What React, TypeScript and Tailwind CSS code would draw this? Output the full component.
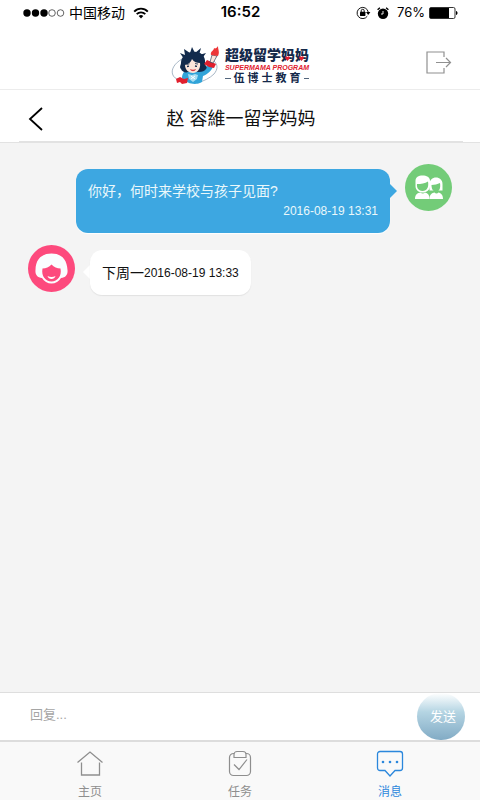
import React from "react";

const cjk = "font-['Liberation_Sans','Noto_Sans_CJK_SC',sans-serif]";

function StatusBar() {
  return (
    <div className="grid h-[25px] grid-cols-3 items-center pr-[22px] pl-[23px] text-black">
      <div className="flex items-center">
        <svg className="mr-1 h-3 w-[42px]" viewBox="0 0 42 12" aria-hidden="true">
          <circle cx="4" cy="6" r="3.7" />
          <circle cx="12.5" cy="6" r="3.7" />
          <circle cx="21" cy="6" r="3.7" />
          <circle cx="29" cy="6" r="3.3" fill="none" stroke="#222" strokeWidth="0.7" />
          <circle cx="37.5" cy="6" r="3.3" fill="none" stroke="#222" strokeWidth="0.7" />
        </svg>
        <span className="text-sm whitespace-nowrap">中国移动</span>
        <svg className="ml-2 h-3 w-4 shrink-0" viewBox="0 0 16 12" fill="none" stroke="#000" strokeWidth="1.9" aria-hidden="true">
          <path d="M1.2 4.6C5 .6 11 .6 14.8 4.6" />
          <path d="M3.7 7.2C6.1 4.8 9.9 4.8 12.3 7.2" />
          <path d="M5.7 9 8 11.4 10.3 9C9 7.8 7 7.8 5.7 9Z" fill="#000" stroke="none" />
        </svg>
      </div>
      <div className="text-center font-[Inter,sans-serif] text-[15px] font-semibold">16:52</div>
      <div className="flex items-center justify-end">
        <svg className="mr-1.5 h-[13px] w-[15px]" viewBox="0 0 15 13" aria-hidden="true">
          <path d="M11.3 10.2A5.6 5.6 0 1 1 12.2 6" fill="none" stroke="#111" strokeWidth="1" />
          <path d="M10 6h4.4l-2.2 3Z" />
          <rect x="4" y="5.8" width="5.4" height="4.2" rx=".4" />
          <path d="M5.2 6V4.8a1.5 1.5 0 0 1 3 0V6" fill="none" stroke="#111" strokeWidth="1" />
        </svg>
        <svg className="mr-2 h-3 w-3" viewBox="0 0 12 12" aria-hidden="true">
          <circle cx="6" cy="6.7" r="5.2" />
          <path d="M.6 2.8 2.9.8M11.4 2.8 9.1.8" stroke="#000" strokeWidth="1.4" />
          <path d="M6 4v3H4" fill="none" stroke="#fff" strokeWidth=".9" />
        </svg>
        <span className="font-[Inter,sans-serif] text-[13px]">76%</span>
        <svg className="ml-1 h-3 w-[29px] shrink-0" viewBox="0 0 29 12" aria-hidden="true">
          <rect x=".5" y=".5" width="25.5" height="11" rx="1.5" fill="#fff" stroke="#333" />
          <rect x="1" y="1" width="19" height="10" />
          <path d="M27 4c2 .5 2 3.500 0 4Z" />
        </svg>
      </div>
    </div>
  );
}

function Mascot() {
  return (
    <svg className="h-[40px] w-[50px]" viewBox="0 0 50 40" aria-hidden="true">
      <path d="M11 13C4 17 0 23 1.500 28c1 3 3 5 6 5M43 15c4 4 4 8 0 13-4 4-10 7-17 9" fill="none" stroke="#92a5b8" strokeWidth=".8" />
      <path d="M11 32c0-5 3-8 7-9l12 1c4-1 6-4 8-8l5 3c-2 5-6 9-11 11l-1 6c-5 3-14 3-20-4Z" fill="#31a4d9" />
      <path d="m13 13-4-6 5 2-1-6 6 4 2-6 3 6 6-5-2 7 7-2-5 7Z" fill="#122a4c" />
      <path d="M10 23c-2-2 0-4 0-6 0-6 5-11 12-11 7-1 13 4 12 11 0 3 3 4 1 6-1 2-4 3-7 3H17c-2 1-6 0-7-3Z" fill="#122a4c" />
      <path d="M14 19c4-1 6-3 7-6 2 3 5 4 8 4 1 6-3 10-7 10s-8-3-8-8Z" fill="#fbe5db" />
      <path d="m15.500 18.500 3-.7m5.500-.3 3 .6" stroke="#122a4c" strokeWidth=".8" />
      <path d="m16 20.500 2-.3m6-.2 2 .4" stroke="#122a4c" strokeWidth="1.300" />
      <path d="M19 23c2 1 4 1 6 0-1 3-5 3-6 0Z" fill="#d83a43" />
      <path d="m5 33 4-2 4 2 4-1-1 5-5 1-2-2-3 1Z" fill="#e1202e" />
      <path d="m17 28 4 1 3-1 3 1-1 4-4 3-4-3Z" fill="#a7ddf2" />
      <path d="m20 30 4 3m-4 0 4-3" stroke="#fff" />
      <path d="m33 18 3-4 9 4-2 4-5-1Z" fill="#e1202e" />
      <path d="m41 9 5 1-4 7-3-1Z" fill="#fbe5db" stroke="#122a4c" strokeWidth=".6" />
      <path d="M40 9c-1-4 3-4 3-7 1 1 3 0 4-2 0 4 2 6 0 10Z" fill="#ed3638" />
    </svg>
  );
}

function Header() {
  return (
    <header className="grid h-[65px] grid-cols-[1fr_auto_1fr] items-center border-b border-[#ececec] px-7 pt-3">
      <span />
      <div className="flex items-center gap-1 pt-1.5">
        <Mascot />
        <div className="flex flex-col items-center whitespace-nowrap text-[#14294a]">
          <div className="relative text-sm leading-[17px] font-black">
            超级留学妈妈
            <svg className="absolute right-1 bottom-[3px] h-[5px] w-5" viewBox="0 0 20 5" fill="#e1202e" aria-hidden="true">
              <path d="M2.500 5 0 2 1 0l1.500 1L4 0l1 2ZM16.500 5 14 2l1-2 1.500 1L18 0l1 2Z" />
            </svg>
          </div>
          <div className="text-[7px] leading-[7px] font-bold text-[#e1202e] italic">SUPERMAMA PROGRAM</div>
          <div className="flex w-full items-center gap-[3px] text-[11px] leading-[14px] font-bold">
            <span className="h-px flex-1 bg-[#53657c]" />
            <span className="flex gap-[3px]">
              {["伍", "博", "士", "教", "育"].map((c) => (
                <span key={c}>{c}</span>
              ))}
            </span>
            <span className="h-px flex-1 bg-[#53657c]" />
          </div>
        </div>
      </div>
      <button type="button" aria-label="退出" className="justify-self-end">
        <svg className="h-6 w-[26px]" viewBox="0 0 26 24" fill="none" stroke="#909090" strokeWidth="1.2" aria-hidden="true">
          <path d="M18 6V1H1v21h17v-5M10 11.500h14M20 7l4.500 4.500L20 16" />
        </svg>
      </button>
    </header>
  );
}

function TitleRow() {
  return (
    <div className="border-b border-[#e2e2e2]">
      <div className="mr-[17px] ml-[19px] grid h-[52px] grid-cols-[1fr_auto_1fr] items-center border-b border-[#e2e2e2] pt-1.5">
        <button type="button" aria-label="返回" className="ml-[9px] justify-self-start">
          <svg className="h-6 w-4" viewBox="0 0 16 24" fill="none" stroke="#000" strokeWidth="1.8" aria-hidden="true">
            <path d="M14 1 2 12l12 11" />
          </svg>
        </button>
        <h1 className="text-lg leading-7 text-[#111]">赵 容維一留学妈妈</h1>
        <span />
      </div>
    </div>
  );
}

function CoupleAvatar() {
  return (
    <svg className="h-[47px] w-[47px] shrink-0" viewBox="0 0 47 47" aria-hidden="true">
      <circle cx="23.500" cy="23.500" r="23.500" fill="#73cc78" />
      <path d="M24.500 26.500V20c0-4 3-6.500 6.500-6.500s6.500 2.500 6.500 6.500v6.500Z" fill="#fff" />
      <path d="M26.500 21c3 0 6-.7 8.500-2 .8 5-.5 8.500-4 8.500s-4.500-3.500-4.500-6.500Z" fill="#73cc78" />
      <path d="M24.500 35c0-4.500 2.500-6 5-6.500 1 1.300 3 1.300 4 0 2.500.5 4.500 2.500 4.500 6.500Z" fill="#fff" />
      <path d="M10.500 22V17c0-4 3-5.500 7-5.500s7.500 1.500 7.500 5.500v5c0 4-3.500 6.500-7.500 6.500S10.500 26 10.500 22Z" fill="#fff" />
      <path d="M12 20c4 0 8-.5 11-2.500C24 23 22 27 17.500 27S11.500 23 12 20Z" fill="#73cc78" />
      <path d="M10 35c0-4.500 2.500-6 5.500-6.500 1 1.300 3.500 1.300 4.500 0 3 .5 4.500 2.500 4.500 6.500Z" fill="#fff" />
    </svg>
  );
}

function MamaAvatar() {
  return (
    <svg className="h-[47px] w-[47px] shrink-0" viewBox="0 0 47 47" aria-hidden="true">
      <circle cx="23.500" cy="23.500" r="23.500" fill="#fd4a7d" />
      <path d="M14 33c-5-.5-7-4-6.500-8C7.500 14 14 8.500 23.500 8.500S39 14 39.500 25c.5 4-1.500 7.500-6.500 8-2 3.500-5.500 5.500-9.500 5.500S16 36.500 14 33Z" fill="#fafdff" />
      <path d="M14.500 23.500c3.500 0 6.500-1.500 9-4 2.500 2.500 5.500 4 9 4C34 31 29.500 36.500 23.500 36.500S13 31 14.500 23.500Z" fill="#fd4a7d" />
      <path d="M19.500 31c2.500 1.300 5.500 1.300 8 0-1 4-7 4-8 0Z" fill="#fff" />
    </svg>
  );
}

function Chat() {
  return (
    <main className="flex flex-1 flex-col gap-3 bg-[#f4f4f4] px-7 pt-[21px]">
      <div className="flex items-start justify-end">
        <div className="mt-[5px] ml-12 h-16 flex-1 rounded-xl bg-[#3da7e1] px-3 pt-2.5 shadow-[0_1px_1px_#fff]">
          <p className="text-sm leading-6 text-[#eaf8fb]">你好，何时来学校与孩子见面?</p>
          <p className="text-right text-xs leading-4 text-[#eaf8fb]">2016-08-19 13:31</p>
        </div>
        <svg className="mt-5 mr-2 h-3.5 w-[7px] shrink-0" viewBox="0 0 7 14" fill="#3da7e1" aria-hidden="true">
          <path d="M0 0 7 7 0 14Z" />
        </svg>
        <CoupleAvatar />
      </div>
      <div className="flex items-start">
        <MamaAvatar />
        <svg className="mt-5 ml-2 h-3.5 w-[7px] shrink-0" viewBox="0 0 7 14" fill="#fff" aria-hidden="true">
          <path d="M7 0 0 7 7 14Z" />
        </svg>
        <div className="mt-[5px] flex h-[45px] items-center rounded-xl bg-white px-3 text-[#111] shadow-[0_1px_1px_#e2e2e2]">
          <p className="text-sm">
            下周一<span className="align-[1px] text-xs">2016-08-19 13:33</span>
          </p>
        </div>
      </div>
    </main>
  );
}

function ReplyForm() {
  return (
    <form className="flex h-12 items-center border-t border-[#dedede] bg-white pr-[15px] pl-[30px]" onSubmit={(e) => e.preventDefault()}>
      <input
        type="text"
        aria-label="回复"
        placeholder="回复..."
        className="h-10 min-w-0 flex-1 pb-1 text-[13px] text-[#333] outline-none placeholder:text-[#a5a5a5]"
      />
      <button type="submit" className="h-[47px] w-12 rounded-full bg-linear-to-b from-white via-[#b5d5e3] via-40% to-[#82abc5] pl-1 text-[13px] text-white">
        发送
      </button>
    </form>
  );
}

function TabBar() {
  const icon = "h-7 w-7";
  const tab = "flex flex-col items-center gap-1.5 pt-2";
  return (
    <nav className="grid h-[60px] grid-cols-3 border-t-2 border-[#dddddd] bg-[#f9f9f9] px-[15px] text-xs leading-4 text-[#8e8e8e]">
      <a href="#home" className={tab}>
        <svg className={icon} viewBox="0 0 28 28" fill="none" stroke="#8e8e8e" strokeWidth="1.3" aria-hidden="true">
          <path d="M1.500 12.500 14 2l12.500 10.500M5.500 12.500V25h18V12.500" />
        </svg>
        <span>主页</span>
      </a>
      <a href="#tasks" className={tab}>
        <svg className={icon} viewBox="0 0 28 28" fill="none" stroke="#8e8e8e" strokeWidth="1.2" aria-hidden="true">
          <path d="M8 3.500H7.500A4 4 0 0 0 3.500 7.500v14a4 4 0 0 0 4 4h13a4 4 0 0 0 4-4v-14a4 4 0 0 0-4-4H20" />
          <path d="M8 7.500v-3a3 3 0 0 1 3-3h6a3 3 0 0 1 3 3v3ZM8 14.500l5 5 8-10" />
        </svg>
        <span>任务</span>
      </a>
      <a href="#messages" aria-current="page" className={`${tab} text-[#2b87dc]`}>
        <svg className={icon} viewBox="0 0 28 28" fill="none" stroke="#2b87dc" strokeWidth="1.3" aria-hidden="true">
          <path d="M4 1.500h20a2.500 2.500 0 0 1 2.500 2.500v14a2.500 2.500 0 0 1-2.500 2.500h-5L14 26l-5-5.500H4A2.500 2.500 0 0 1 1.500 18V4A2.500 2.500 0 0 1 4 1.500Z" />
          <g fill="#2b87dc" stroke="none">
            <circle cx="7" cy="12" r="1.300" />
            <circle cx="14" cy="12" r="1.300" />
            <circle cx="21" cy="12" r="1.300" />
          </g>
        </svg>
        <span>消息</span>
      </a>
    </nav>
  );
}

export default function App() {
  return (
    <div className={`flex min-h-screen flex-col bg-white ${cjk}`}>
      <StatusBar />
      <Header />
      <TitleRow />
      <Chat />
      <ReplyForm />
      <TabBar />
    </div>
  );
}
